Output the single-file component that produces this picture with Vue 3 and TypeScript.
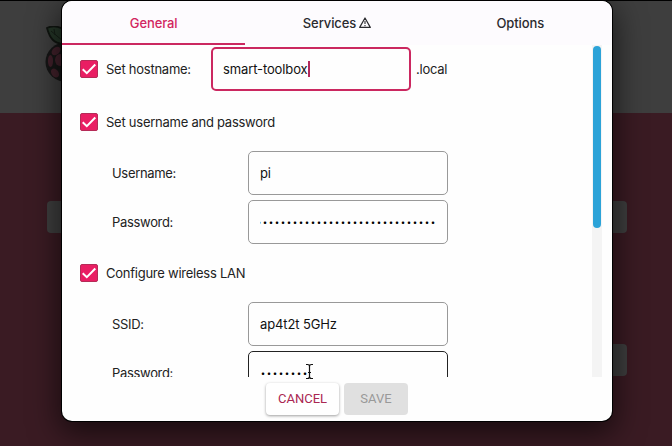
<script setup lang="ts">
import { ref } from 'vue'

const tabs = ['General', 'Services', 'Options']
const active = ref('General')
const accountMask = Array.from({ length: 30 }, () => '•')
const wifiMask = Array.from({ length: 8 }, () => '•')
</script>

<template>
  <div class="backdrop">
    <header class="banner"></header>
    <svg class="logo" viewBox="0 0 40 60" width="40" height="60">
      <ellipse cx="22" cy="36" rx="21.500" ry="20" fill="#161616" />
      <path d="M2 2 C8-1 18 0 22 8 C24 12 22 18 18 18 C9 17 5 13 2 2Z" fill="#243527" stroke="#101510" stroke-width="1.800" />
      <path d="M6 5L18 15M9 3L10 9" fill="none" stroke="#151e16" />
      <ellipse cx="5.500" cy="35" rx="2.600" ry="6" fill="#42212b" />
      <ellipse cx="15" cy="34" rx="5" ry="6" fill="#42212b" />
      <ellipse cx="11" cy="25" rx="5" ry="3.500" transform="rotate(-40 11 25)" fill="#42212b" />
      <ellipse cx="10" cy="47" rx="3.500" ry="5" transform="rotate(-35 10 47)" fill="#42212b" />
    </svg>
    <div class="behind first"></div>
    <div class="behind second"></div>

    <main class="dialog">
      <nav class="tabs">
        <button v-for="tab in tabs" :key="tab" class="tab" :class="{ active: active === tab }" @click="active = tab">
          {{ tab }}
          <svg v-if="tab === 'Services'" class="warning" viewBox="0 0 12 12" width="12" height="12">
            <path d="M6 1L11.300 10.400H0.700Z" fill="none" stroke="currentColor" stroke-width="1.200" stroke-linejoin="round" />
            <path d="M6 4.100V7.100M6 8.100V9.200" stroke="currentColor" stroke-width="1.100" />
          </svg>
        </button>
      </nav>

      <section class="body">
        <div class="form">
          <div class="row host">
            <span class="check"><svg viewBox="0 0 18 18" width="18" height="18"><path d="M2.700 9.200L6.800 13.200L15.300 4.500" /></svg></span>
            <span class="label host-label">Set hostname:</span>
            <div class="field focused">smart-toolbox<i class="caret"></i></div>
            <span class="suffix">.local</span>
          </div>
          <div class="row heading account">
            <span class="check"><svg viewBox="0 0 18 18" width="18" height="18"><path d="M2.700 9.200L6.800 13.200L15.300 4.500" /></svg></span>
            <span class="label">Set username and password</span>
          </div>
          <div class="group">
            <span>Username:</span>
            <div class="field">pi</div>
            <span>Password:</span>
            <div class="field"><div class="mask long"><b v-for="(dot, i) in accountMask" :key="i">{{ dot }}</b></div></div>
          </div>
          <div class="row heading wireless">
            <span class="check"><svg viewBox="0 0 18 18" width="18" height="18"><path d="M2.700 9.200L6.800 13.200L15.300 4.500" /></svg></span>
            <span class="label">Configure wireless LAN</span>
          </div>
          <div class="group">
            <span>SSID:</span>
            <div class="field">ap4t2t 5GHz</div>
            <span>Password:</span>
            <div class="field hovered"><div class="mask"><b v-for="(dot, i) in wifiMask" :key="i">{{ dot }}</b></div></div>
          </div>
        </div>
        <div class="track"><div class="thumb"></div></div>
      </section>

      <footer class="actions">
        <button class="action cancel">CANCEL</button>
        <button class="action save" disabled>SAVE</button>
      </footer>
    </main>

    <svg class="pointer" viewBox="0 0 9 17" width="9" height="17">
      <path d="M1 1.500H2.500Q4.500 1.500 4.500 3.500V13.500Q4.500 15.500 2.500 15.500H1M8 1.500H6.500Q4.500 1.500 4.500 3.500M4.500 13.500Q4.500 15.500 6.500 15.500H8M3 9.500H6" fill="none" stroke="#fff" stroke-width="2.200" />
      <path d="M1 1.500H2.500Q4.500 1.500 4.500 3.500V13.500Q4.500 15.500 2.500 15.500H1M8 1.500H6.500Q4.500 1.500 4.500 3.500M4.500 13.500Q4.500 15.500 6.500 15.500H8M3 9.500H6" fill="none" stroke="#111" stroke-width="1.200" />
    </svg>
  </div>
</template>

<style>
body { margin: 0; overflow: hidden; }
</style>

<style scoped>
* { box-sizing: border-box; }
.backdrop {
  position: relative;
  width: 672px;
  height: 446px;
  padding: 1px 60px 0 62px;
  overflow: hidden;
  background: #3a1b23;
  font-family: Inter, "Liberation Sans", sans-serif;
  font-size: 13px;
  letter-spacing: -.25px;
  color: #222;
}
.banner { position: absolute; inset: 0 0 auto; height: 113px; background: #3e3e3e; border-top: 1px solid #000; }
.logo { position: absolute; left: 45px; top: 26px; }
.behind { position: absolute; left: 47px; width: 580px; height: 32px; border-radius: 4px; background: #3e3e3e; }
.first { top: 201px; }
.second { top: 344px; left: 400px; width: 227px; }
.dialog {
  position: relative;
  display: flex;
  flex-direction: column;
  width: 550px;
  height: 420px;
  border-radius: 10px;
  background: #fefefe;
  box-shadow: 0 0 0 1px #000, 0 9px 30px 3px rgba(0, 0, 0, .6);
}
.tabs { display: flex; height: 44px; flex: none; background: #fdfbfe; border-radius: 10px 10px 0 0; }
.tab {
  flex: 1;
  display: flex;
  align-items: center;
  justify-content: center;
  gap: 3px;
  padding: 2px 0 0;
  border: 0;
  border-bottom: 2px solid transparent;
  background: none;
  font: 500 13px Inter, sans-serif;
  letter-spacing: -.1px;
  color: #2a2a2e;
}
.tab.active { color: #d2265f; border-bottom-color: #cb2860; }
.body { display: flex; justify-content: space-between; height: 332px; overflow: hidden; }
.form { padding: 2px 0 0 18px; }
.row { display: flex; align-items: center; }
.host { height: 44px; }
.heading { height: 18px; }
.account { margin: 22px 0 20px; }
.wireless { margin: 20px 0; }
.check { width: 18px; height: 18px; flex: none; border-radius: 2px; background: #e91e63; border: 1px solid #b52b57; }
.check svg { display: block; margin: -1px; }
.check path { fill: none; stroke: #fff; stroke-width: 2; }
.label { margin-left: 8px; white-space: nowrap; }
.host-label { width: 105px; }
.suffix { margin-left: 5px; }
.field {
  display: flex;
  align-items: center;
  width: 200px;
  height: 44px;
  padding: 0 11px;
  border: 1px solid #999;
  border-radius: 5px;
  letter-spacing: -.12px;
  color: #111;
}
.focused { border: 2px solid #cb2860; padding: 0 10px; }
.caret { width: 2px; height: 16px; background: #b32a5c; }
.hovered { border-color: #222; }
.group { display: grid; grid-template-columns: 136px 200px; row-gap: 5px; align-items: center; padding-left: 32px; letter-spacing: -.32px; }
.mask { display: flex; width: 176px; height: 14px; overflow: hidden; }
.mask.long { justify-content: flex-end; }
.mask b { flex: none; width: 6px; font-family: Inter, sans-serif; font-size: 8px; font-weight: 400; line-height: 15px; letter-spacing: 0; text-align: center; color: #000; }
.track { width: 10px; margin-right: 10px; padding: 1px; background: #f4f4f4; }
.thumb { height: 182px; border-radius: 4px; background: #2ca3d8; }
.actions { display: flex; gap: 5px; padding: 6px 0 0 204px; }
.action { height: 32px; padding: 0 0 1px; border: 0; border-radius: 4px; font: 400 13px Roboto, sans-serif; }
.cancel { width: 73px; color: #aa2852; background: #fff; box-shadow: 0 1px 3px rgba(0, 0, 0, .38); }
.save { width: 64px; color: #999; background: #e0e0e0; }
.pointer { position: absolute; left: 305px; top: 363px; }
</style>
